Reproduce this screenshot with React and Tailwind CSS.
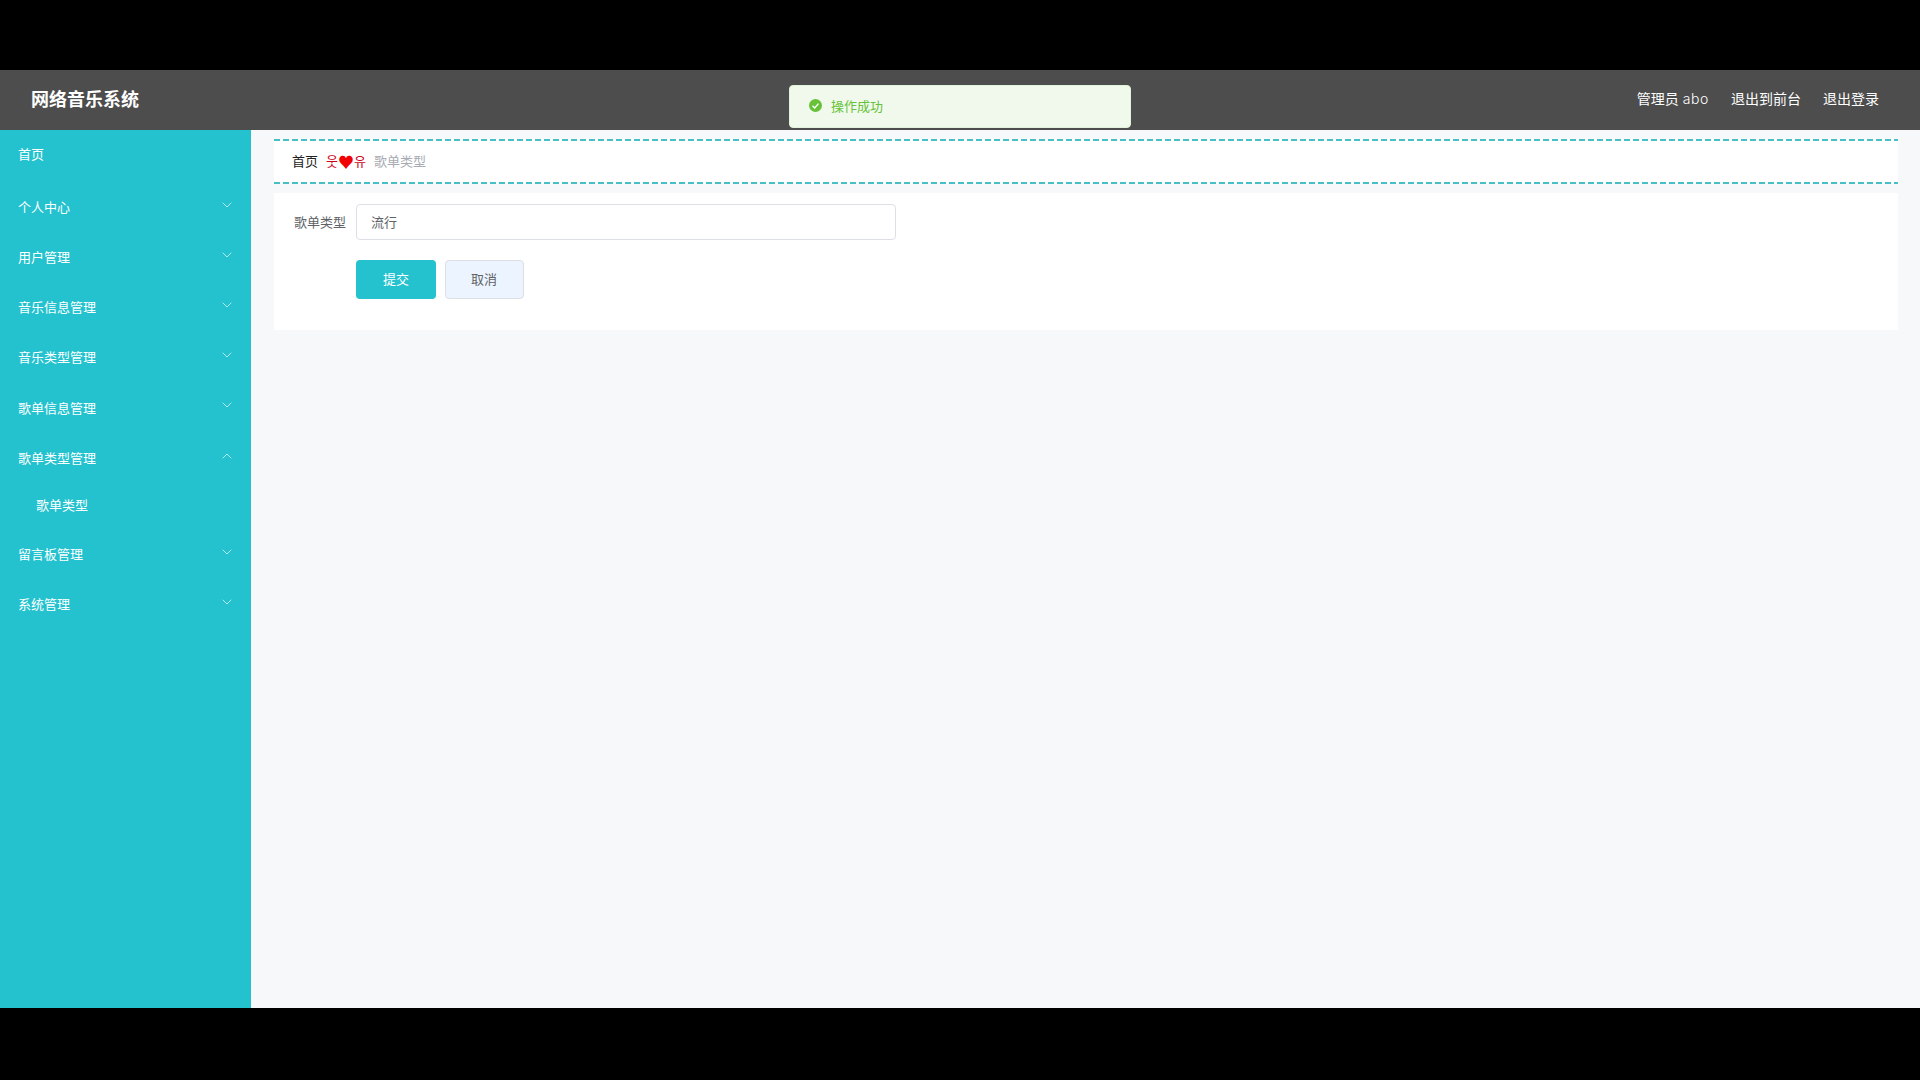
import { ChevronDown, ChevronUp } from "lucide-react";

const font = { fontFamily: '"Noto Sans CJK SC", sans-serif' };

const menus = [
  { title: "个人中心" },
  { title: "用户管理" },
  { title: "音乐信息管理" },
  { title: "音乐类型管理" },
  { title: "歌单信息管理" },
  { title: "歌单类型管理", open: true, children: ["歌单类型"] },
  { title: "留言板管理" },
  { title: "系统管理" },
];

const SideMenu = ({ title, open, children }) => (
  <div>
    <div className="h-[50.2px] flex items-center justify-between pl-[18px] pr-[16px]">
      <span className="pt-[3px]">{title}</span>
      {open ? (
        <ChevronUp size={16} strokeWidth={1} className="-mt-[1px]" />
      ) : (
        <ChevronDown size={16} strokeWidth={1} className="-mt-[1px]" />
      )}
    </div>
    {children &&
      children.map((c) => (
        <div key={c} className="h-[46px] flex items-center pl-[36px] pt-[2px]">
          {c}
        </div>
      ))}
  </div>
);

const DashLine = () => (
  <div className="h-[2px] bg-[repeating-linear-gradient(90deg,#46bfc6_0,#46bfc6_6px,transparent_6px,transparent_9px)]" />
);

export default function App() {
  return (
    <div className="relative h-screen bg-black flex flex-col py-[70px] pb-[72px]" style={font}>
      {/* Header */}
      <header className="h-[60px] shrink-0 bg-[#4d4d4d] flex items-center justify-between pl-[31px] pr-[41px] pb-[3px] text-white">
        <h1 className="text-[18px] font-bold">网络音乐系统</h1>
        <div className="flex items-center gap-[22px] text-[14px]">
          <span className="flex gap-[4px]">
            管理员
            <span className="font-['Inter'] font-light tracking-[0.6px]">abo</span>
          </span>
          <span>退出到前台</span>
          <span>退出登录</span>
        </div>
      </header>

      <div className="flex-1 flex min-h-0">
        {/* Sidebar */}
        <aside className="w-[251px] shrink-0 bg-[#23c2ce] text-white text-[13px]">
          <div className="h-[50px] flex items-center pl-[18px] pb-[3px]">首页</div>
          {menus.map((m) => (
            <SideMenu key={m.title} {...m}>
              {m.children}
            </SideMenu>
          ))}
        </aside>

        {/* Content */}
        <main className="flex-1 bg-[#f6f8fa] pt-[9px] pl-[23px] pr-[22px]">
          <div className="h-[45px] bg-white flex flex-col justify-between">
            <DashLine />
            <div className="flex items-center pl-[18px] pb-[1px] text-[13px]">
              <span className="text-[#222]">首页</span>
              <span
                className="ml-[8px] mr-[8px] flex items-center text-[13px] text-[#d0021b]"
                style={{ fontFamily: '"Noto Sans CJK KR", sans-serif' }}
              >
                웃<span className="text-[16px] leading-none text-[#f00000]">♥</span>유
              </span>
              <span className="text-[#a8abb2]">歌单类型</span>
            </div>
            <DashLine />
          </div>

          <div className="mt-[9px] h-[137px] bg-white pt-[11px] pl-[20px]">
            <div className="flex items-center">
              <label className="w-[62px] pb-[1px] text-[13px] text-[#606266]">歌单类型</label>
              <input
                readOnly
                value="流行"
                className="w-[540px] h-[36px] bg-white border border-[#dcdfe6] rounded-[4px] pl-[14px] pr-[15px] pb-[2px] text-[13px] text-[#606266] outline-none"
              />
            </div>
            <div className="flex gap-[9px] mt-[20px] ml-[62px]">
              <button className="w-[80px] h-[39px] rounded-[4px] bg-[#23c2ce] text-white text-[13px] pb-[2px]">
                提交
              </button>
              <button className="w-[79px] h-[39px] rounded-[4px] bg-[#ecf5ff] border border-[#dcdfe6] text-[#606266] text-[13px] pb-[2px] pr-[1px]">
                取消
              </button>
            </div>
          </div>
        </main>
      </div>

      {/* Message toast */}
      <div className="absolute top-[85px] left-[789px] w-[342px] h-[43px] flex items-center pl-[19px] pb-[2px] gap-[9px] bg-[#f0f9eb] border border-[#e1f3d8] rounded-[4px] text-[13px] text-[#67c23a]">
        <svg width="13" height="13" viewBox="0 0 24 24">
          <circle cx="12" cy="12" r="12" fill="#67c23a" />
          <path d="M6.5 12.5l4 4 7-8" fill="none" stroke="#fff" strokeWidth="2.5" />
        </svg>
        <span>操作成功</span>
      </div>
    </div>
  );
}
